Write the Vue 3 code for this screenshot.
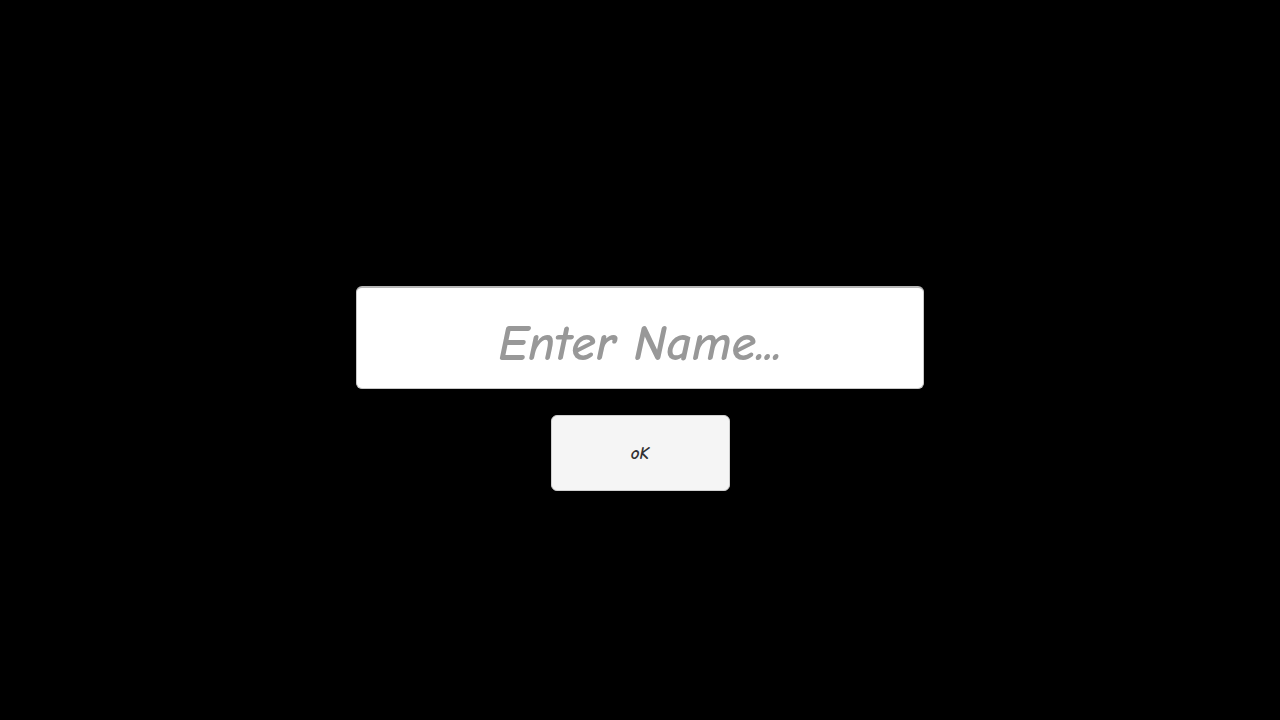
<script setup>
import { ref } from 'vue'

const name = ref('')
</script>

<template>
  <main class="screen">
    <form class="name-form" @submit.prevent>
      <input
        v-model="name"
        class="name-input"
        type="text"
        placeholder="Enter Name..."
        aria-label="Enter Name"
      />
      <button class="ok-button" type="submit">oK</button>
    </form>
  </main>
</template>

<style>
body {
  margin: 0;
  background: #000;
}
</style>

<style scoped>
.screen {
  box-sizing: border-box;
  min-height: 100vh;
  padding: 57px 16px 0;
  display: flex;
  align-items: center;
  justify-content: center;
  background: #000;
}

.name-form {
  width: 100%;
  max-width: 568px;
  display: flex;
  flex-direction: column;
  align-items: center;
  gap: 26px;
}

.name-input {
  box-sizing: border-box;
  width: 100%;
  padding: 26px 16px 14px;
  border: 1px solid #c8c8c8;
  border-top: 2px solid #b8b8b8;
  border-radius: 6px;
  outline: none;
  background: #fff;
  color: #323232;
  font: italic 700 50px/60px "Comic Neue", "Open Sans", cursive;
  text-align: center;
}

.name-input::placeholder {
  color: #989898;
  opacity: 1;
}

.ok-button {
  box-sizing: border-box;
  min-width: 179px;
  padding: 26px 24px 24px;
  border: 1px solid #d0d0d0;
  border-radius: 6px;
  background: #f5f5f5;
  color: #323232;
  font: italic 700 17px/24px "Comic Neue", "Open Sans", cursive;
}
</style>
